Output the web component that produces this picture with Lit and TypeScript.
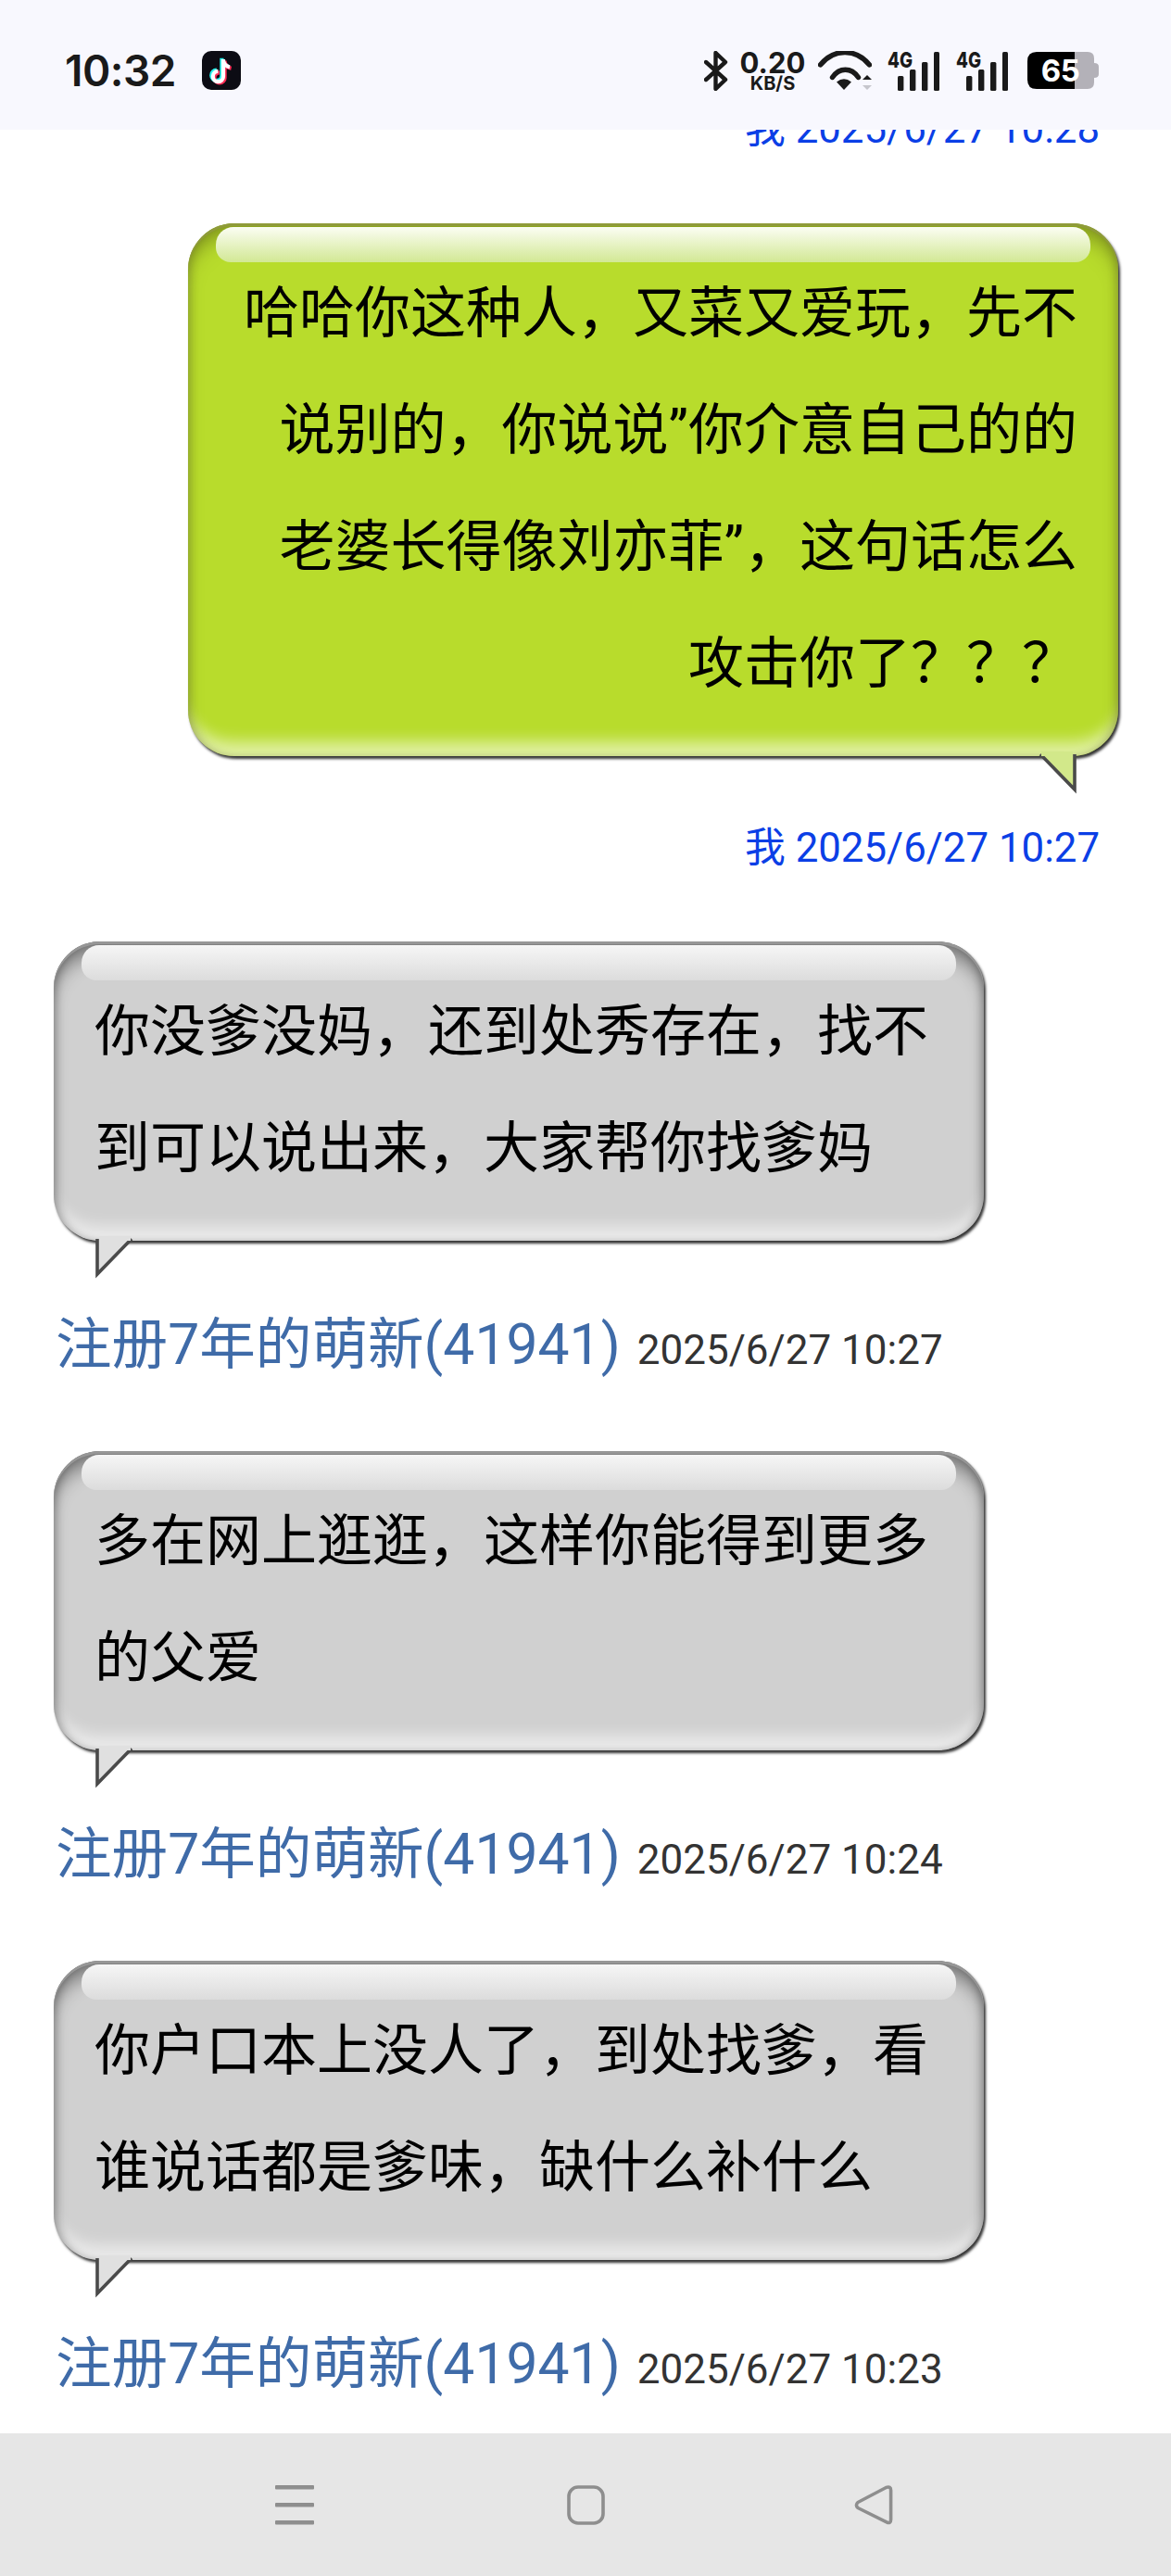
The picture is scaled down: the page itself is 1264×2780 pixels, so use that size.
import { LitElement, html, css, svg } from "lit";
import { customElement } from "lit/decorators.js";

const tail = (fill: string, right: boolean) => html`<svg class="tail ${right ? "tail-r" : "tail-l"}" width="44" height="44" viewBox="0 0 44 44">
  ${right
    ? svg`<path d="M4 0 L41 38 V0" fill="${fill}" stroke="#4a4a4a" stroke-width="3.6"/><path d="M5 -3H39V2H5Z" fill="${fill}"/>`
    : svg`<path d="M40 0 L3 38 V0" fill="${fill}" stroke="#4a4a4a" stroke-width="3.6"/><path d="M5 -3H39V2H5Z" fill="${fill}"/>`}
</svg>`;

const signal = html`<svg width="56" height="49" viewBox="0 -6 56 49" class="ic sigsvg">
  <text x="0" y="18" font-family="Inter, sans-serif" font-size="23" font-weight="800" fill="#1a1a1a" textLength="27" lengthAdjust="spacingAndGlyphs">4G</text>
  <g fill="#1a1a1a">
    <rect x="11" y="27" width="6.4" height="16" rx="1.5"/>
    <rect x="24" y="20" width="6.4" height="23" rx="1.5"/>
    <rect x="37" y="12" width="6.4" height="31" rx="1.5"/>
    <rect x="50" y="1" width="6" height="42" rx="1.5"/>
  </g>
</svg>`;

const OTHERS = [
  { text: "你没爹没妈，还到处秀存在，找不到可以说出来，大家帮你找爹妈", time: "2025/6/27 10:27" },
  { text: "多在网上逛逛，这样你能得到更多的父爱", time: "2025/6/27 10:24" },
  { text: "你户口本上没人了，到处找爹，看谁说话都是爹味，缺什么补什么", time: "2025/6/27 10:23" },
];

@customElement("app-root")
export class AppRoot extends LitElement {
  static styles = css`
    :host { display: block; }
    .page {
      width: 1264px; height: 2780px; display: flex; flex-direction: column; overflow: hidden; background: #fff;
      font-family: Roboto, "Noto Sans CJK SC", sans-serif; color: #000;
    }
    .status {
      position: relative; z-index: 2; flex: none; height: 140px; background: #f8f8fe; display: flex;
      justify-content: space-between; align-items: center; padding: 12px 78px 0 70px; box-sizing: border-box;
    }
    .left, .right { display: flex; align-items: center; }
    .time { font-family: Inter, sans-serif; font-weight: 600; font-size: 46px; color: #1a1a1a; letter-spacing: -0.5px; line-height: 48px; }
    .tt { margin-left: 28px; }
    .ic { display: block; flex: none; }
    .sigsvg { margin-top: -6px; }
    .speed { display: flex; flex-direction: column; align-items: center; width: 68px; margin: 0 15px 0 14px; font-family: Inter, sans-serif; color: #1a1a1a; font-weight: 700; }
    .speed b { font-size: 31px; line-height: 27px; font-weight: 700; letter-spacing: 0; }
    .speed span { font-size: 20px; line-height: 17px; margin-top: 1px; }
    .sig1 { margin-left: 17px; }
    .sig2 { margin-left: 18px; }
    .battery {
      position: relative; margin-left: 21px; width: 77px; height: 40px; display: flex; align-items: center; justify-content: center;
    }
    .battery .bg { position: absolute; inset: 0; }
    .battery span { position: relative; font-family: Inter, sans-serif; font-weight: 700; font-size: 33px; color: #fff; margin-left: -6px; letter-spacing: -0.5px; }

    .chat { flex: 1; min-height: 0; overflow: hidden; margin-top: -36px; display: flex; flex-direction: column; }
    .meta { height: 70px; flex: none; display: flex; align-items: baseline; line-height: 70px; white-space: nowrap; }
    .mine { justify-content: flex-end; padding-right: 77px; color: #0b3fe6; font-size: 43.8px; }
    .theirs { padding-left: 60px; margin-top: 78px; margin-bottom: 79px; }
    .name { font-size: 60.6px; color: #3f6ba8; }
    .date { font-size: 44px; color: #333; margin-left: 18px; }
    .row-me { display: flex; justify-content: flex-end; padding-right: 57px; margin: 67px 0 64px; }
    .row-them { display: flex; padding-left: 58px; }
    .first-them { margin-top: 66px; }

    .bubble {
      position: relative; width: 1004px; box-sizing: border-box; border-radius: 50px;
      padding: 35px 60px 36px 44px; font-size: 60px; line-height: 126px;
    }
    .bubble::before {
      content: ""; position: absolute; top: 4px; left: 30px; right: 30px; height: 38px; border-radius: 19px 19px 16px 16px;
    }
    .gray {
      background: #d0d0d0;
      box-shadow: inset 0 3px 0 0 #979797, inset 0 20px 20px -6px rgba(0,0,0,.42), inset 6px 0 9px -3px rgba(0,0,0,.24), inset -6px 0 9px -3px rgba(0,0,0,.24),
        inset 0 -26px 16px -10px rgba(255,255,255,.55), 2px 3px 3px 0 rgba(0,0,0,.8);
    }
    .gray::before { background: linear-gradient(#f6f6f6, #dcdcdc); }
    .green {
      background: #b8dc2c; padding: 35px 44px 36px 60px; text-align: right;
      box-shadow: inset 0 3px 0 0 #8f9b3a, inset 0 20px 20px -6px rgba(90,100,20,.5), inset 6px 0 9px -3px rgba(70,70,30,.28), inset -6px 0 9px -3px rgba(70,70,30,.28),
        inset 0 -26px 16px -10px rgba(255,255,255,.55), 2px 3px 3px 0 rgba(0,0,0,.8);
    }
    .green::before { background: linear-gradient(#fbfdf3, #d2e894); }
    .tail { position: absolute; top: 100%; margin-top: -2px; display: block; overflow: visible; }
    .tail-r { right: 44px; }
    .tail-l { left: 44px; }

    .nav {
      position: relative; z-index: 2; flex: none; height: 154px; background: #e6e6e6; display: flex; align-items: flex-start; padding: 56px 0 0 297px; box-sizing: border-box;
    }
    .nav .home { margin-left: 273px; }
    .nav .back { margin-left: 269px; }
  `;

  render() {
    return html`<div class="page">
      <div class="status">
        <div class="left">
          <span class="time">10:32</span>
          <svg class="ic tt" width="42" height="42" viewBox="0 0 42 42">
            <rect width="42" height="42" rx="10" fill="#0c0c14"/>
            <g fill="none" stroke-width="4.2">
              <path transform="translate(-1.6 -1.2)" stroke="#25f4ee" d="M23 9V27.5A5.6 5.6 0 1 1 17.4 21.9M23 10C23.6 14 26 16.6 30 17.4"/>
              <path transform="translate(1.6 1.4)" stroke="#fe2c55" d="M23 9V27.5A5.6 5.6 0 1 1 17.4 21.9M23 10C23.6 14 26 16.6 30 17.4"/>
              <path stroke="#fff" d="M23 9V27.5A5.6 5.6 0 1 1 17.4 21.9M23 10C23.6 14 26 16.6 30 17.4"/>
            </g>
          </svg>
        </div>
        <div class="right">
          <svg class="ic" width="26" height="43" viewBox="0 0 26 43">
            <path d="M2 12L23 31L12.5 41V2L23 12L2 31" fill="none" stroke="#1a1a1a" stroke-width="4.4" stroke-linejoin="round" stroke-linecap="round"/>
          </svg>
          <div class="speed"><b>0.20</b><span>KB/S</span></div>
          <svg class="ic" width="58" height="42" viewBox="0 0 58 42">
            <path d="M2.5 15C17 -3 41 -3 55.5 15" fill="none" stroke="#1a1a1a" stroke-width="5.4" stroke-linecap="round"/>
            <path d="M15.5 28.5C23 17.5 36 17.5 43.5 28.5" fill="none" stroke="#1a1a1a" stroke-width="5.4" stroke-linecap="round"/>
            <path d="M20 33.5Q28 27 36 33.5L28 42Z" fill="#1a1a1a"/>
            <path d="M48 31L53 26L58 31Z" fill="#1a1a1a"/>
            <path d="M48 37H58L53 42Z" fill="#c6c6cc"/>
          </svg>
          <span class="sig1">${signal}</span>
          <span class="sig2">${signal}</span>
          <div class="battery">
            <svg class="bg" width="77" height="40" viewBox="0 0 77 40">
              <path d="M51 0H65Q72 0 72 7V12Q77 12 77 16V24Q77 28 72 28V33Q72 40 65 40H51Z" fill="#b3b1b8"/>
              <path d="M10 0H51V40H10Q0 40 0 30V10Q0 0 10 0Z" fill="#000"/>
            </svg>
            <span>65</span>
          </div>
        </div>
      </div>

      <div class="chat">
        <div class="meta mine">我 2025/6/27 10:28</div>
        <div class="row-me">
          <div class="bubble green">哈哈你这种人，又菜又爱玩，先不说别的，你说说”你介意自己的的老婆长得像刘亦菲”，这句话怎么攻击你了？？？${tail("#d2e88a", true)}</div>
        </div>
        <div class="meta mine">我 2025/6/27 10:27</div>
        ${OTHERS.map(
          (m, i) => html`<div class="row-them ${i === 0 ? "first-them" : ""}">
              <div class="bubble gray">${m.text}${tail("#e0e0e0", false)}</div>
            </div>
            <div class="meta theirs"><span class="name">注册7年的萌新(41941)</span><span class="date">${m.time}</span></div>`
        )}
      </div>

      <div class="nav">
        <svg class="ic" width="42" height="44" viewBox="0 0 42 44" fill="#8e8e8e">
          <rect y="0" width="42" height="4.4" rx="1"/>
          <rect y="19" width="42" height="4.4" rx="1"/>
          <rect y="38" width="42" height="4.4" rx="1"/>
        </svg>
        <svg class="ic home" width="41" height="44" viewBox="0 0 41 44">
          <rect x="2" y="2" width="37" height="39" rx="10" fill="none" stroke="#8e8e8e" stroke-width="3.6"/>
        </svg>
        <svg class="ic back" width="42" height="44" viewBox="0 0 42 44">
          <path d="M4 18.5L34.5 2.5Q39.6 0.8 39.6 5.5V37Q39.6 42.2 35 39.8L4 24.5Q0.8 21.5 4 18.5Z" fill="none" stroke="#8e8e8e" stroke-width="3.6" stroke-linejoin="round"/>
        </svg>
      </div>
    </div>`;
  }
}
